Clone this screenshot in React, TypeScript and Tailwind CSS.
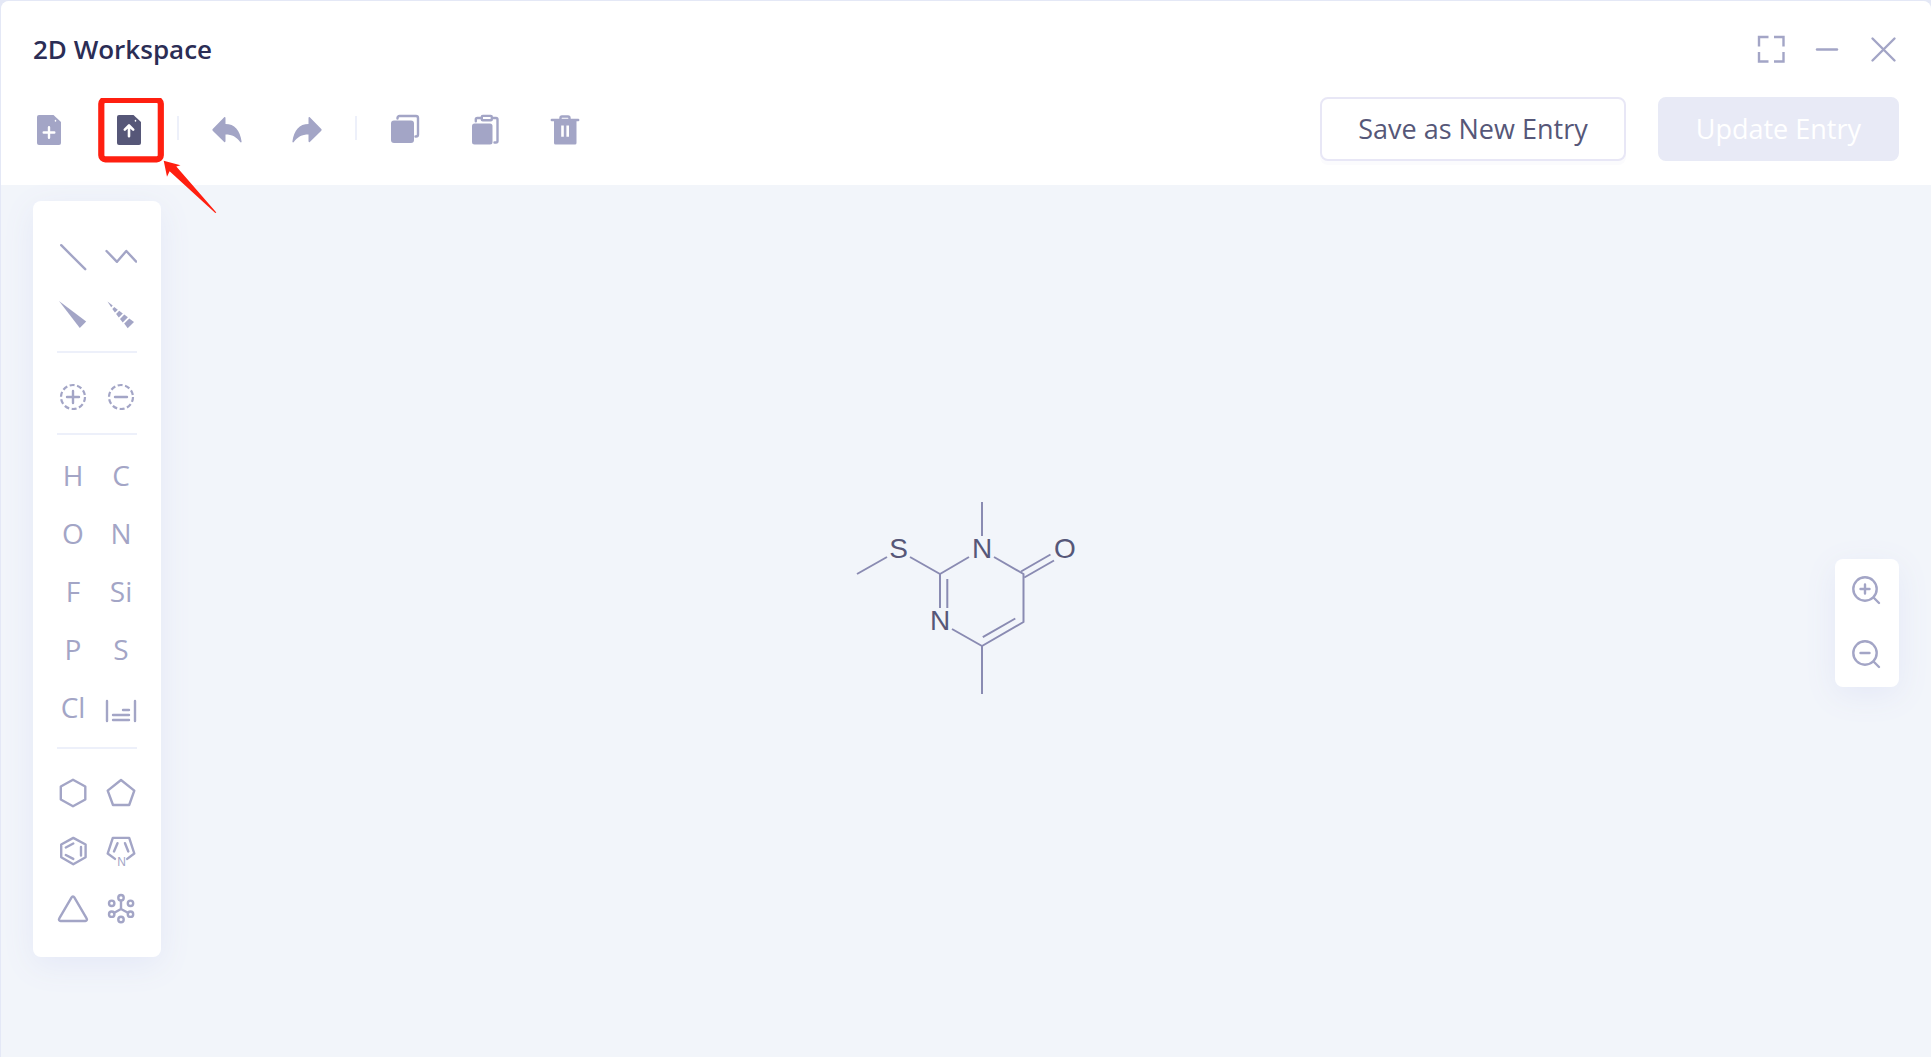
import type { ReactNode } from "react";

function Icon({ children }: { children: ReactNode }) {
  return (
    <svg
      viewBox="0 0 32 32"
      className="block size-8"
      fill="none"
      stroke="currentColor"
      strokeWidth={2.4}
      strokeLinecap="round"
      strokeLinejoin="round"
      aria-hidden="true"
    >
      {children}
    </svg>
  );
}

type Tool = { label: string; icon: ReactNode };

const windowControls: Tool[] = [
  {
    label: "Full screen",
    icon: <path strokeLinecap="butt" strokeLinejoin="miter" d="M4 13.500V4h9.500M19 4h9.500v9.500M28.500 19v9.500H19M13.500 28.500H4V19" />,
  },
  { label: "Minimize", icon: <path d="M6 16.500h20" /> },
  { label: "Close", icon: <path d="M5.500 5.500l22 22M27.500 5.500l-22 22" /> },
];

const historyTools: Tool[] = [
  {
    label: "Undo",
    icon: (
      <path
        fill="currentColor"
        stroke="none"
        d="M1.700 15.100L13.200 3.300c.6-.5 1.300-.2 1.300.6v6.100C23.500 10 29 16 30.600 27.600c.1.900-.9 1.200-1.400.5C25.600 23 21 20.600 14.500 20.600v6.700c0 .8-.7 1.100-1.300.6L1.700 16.700c-.5-.5-.5-1.100 0-1.600z"
      />
    ),
  },
  {
    label: "Redo",
    icon: (
      <path
        fill="currentColor"
        stroke="none"
        d="M30.300 15.100L18.800 3.300c-.6-.5-1.300-.2-1.300.6v6.100C8.500 10 3 16 1.400 27.600c-.1.900.9 1.200 1.400.5C6.400 23 11 20.600 17.500 20.600v6.700c0 .8.7 1.100 1.300.6l11.500-11.200c.5-.5.5-1.100 0-1.600z"
      />
    ),
  },
];

const editTools: Tool[] = [
  {
    label: "Copy",
    icon: (
      <>
        <rect x="2" y="6.500" width="23" height="22.500" rx="3" fill="currentColor" stroke="none" />
        <path d="M8.500 4.500V4a2 2 0 0 1 2-2H27a2 2 0 0 1 2 2v16.500a2 2 0 0 1-2 2h-.5" />
      </>
    ),
  },
  {
    label: "Paste",
    icon: (
      <>
        <rect x="3" y="9.500" width="20.500" height="21" rx="2.500" fill="currentColor" stroke="none" />
        <path d="M6.800 7.200V5.500A1.500 1.500 0 0 1 8.300 4h4M23.500 4H27a1.500 1.500 0 0 1 1.500 1.500V27a1.500 1.500 0 0 1-1.500 1.500h-1.500" />
        <rect x="12.800" y="1.900" width="10" height="4.400" rx="1" />
      </>
    ),
  },
  {
    label: "Delete",
    icon: (
      <>
        <path d="M2.800 6h26.400M11.500 5.700V4a1.500 1.500 0 0 1 1.500-1.500h6A1.500 1.500 0 0 1 20.500 4v1.700" />
        <path
          fill="currentColor"
          stroke="none"
          fillRule="evenodd"
          d="M5 6.500h22.500v22.500a1.500 1.500 0 0 1-1.500 1.500H6.500A1.500 1.500 0 0 1 5 29zM12.200 11.500v11.200h2.600V11.500zM17.400 11.500v11.200H20V11.500z"
        />
      </>
    ),
  },
];

const bondTools: Tool[] = [
  { label: "Single bond", icon: <path d="M4.200 4.200l24 24" /> },
  { label: "Chain", icon: <path d="M1.500 10L12 20.800 21.300 10l9.900 10.600" /> },
  {
    label: "Wedge bond",
    icon: <path fill="currentColor" stroke="none" d="M2 2l27.200 20.600-6.400 6.400z" />,
  },
  {
    label: "Hashed bond",
    icon: (
      <g fill="currentColor" stroke="none">
        <path d="M2.500 2.500l5.200 4.100-1.500 1.600z" />
        <path d="M9.300 8l3.500 2.700-2.900 2.900-2.600-3.500z" />
        <path d="M14.200 11.800l3.600 2.700-4 4-2.700-3.600z" />
        <path d="M19.300 15.600l3.600 2.700-5.200 5.200-2.700-3.600z" />
        <path d="M24.300 19.400l4.700 3.500-6.300 6.300-3.500-4.700z" />
      </g>
    ),
  },
];

const chargeTools: Tool[] = [
  {
    label: "Increase charge",
    icon: (
      <>
        <circle cx="16" cy="16" r="12" strokeWidth={2.2} strokeDasharray="5 2.540" strokeLinecap="butt" />
        <path d="M16 10v12M10 16h12" />
      </>
    ),
  },
  {
    label: "Decrease charge",
    icon: (
      <>
        <circle cx="16" cy="16" r="12" strokeWidth={2.2} strokeDasharray="5 2.540" strokeLinecap="butt" />
        <path d="M10 16h12" />
      </>
    ),
  },
];

const elements = ["H", "C", "O", "N", "F", "Si", "P", "S", "Cl"];

const ringTools: Tool[] = [
  { label: "Cyclohexane", icon: <path d="M16 2.800l12.300 6.700v13L16 29.300 3.800 22.500v-13z" /> },
  { label: "Cyclopentane", icon: <path d="M16 3l13.300 10.600L24.200 28H8L2.700 13.600z" /> },
  {
    label: "Benzene",
    icon: (
      <path d="M16.300 2.900l12.300 6.600v12.800l-12.300 6.900-12.100-6.900V9.500zM8.800 12.500l7.500-4M24 12v8.500M8.800 20l7.500 3.900" />
    ),
  },
  {
    label: "Pyrrole",
    icon: (
      <>
        <path d="M10 23.900L2.700 18.500 7.800 2.900h16.400L29.300 18.500 22.200 23.900M12.500 8.200L9 16.500M20 8.200l3.300 8.300" />
        <text
          x="16.500"
          y="30.500"
          textAnchor="middle"
          fontSize="12"
          fill="currentColor"
          stroke="none"
          className="font-['Liberation_Sans',Arial,sans-serif]"
        >
          N
        </text>
      </>
    ),
  },
  { label: "Cyclopropane", icon: <path d="M14.600 4.400a1.500 1.500 0 0 1 2.700 0l12.300 21a1.600 1.600 0 0 1-1.400 2.600H3.700a1.600 1.600 0 0 1-1.400-2.600z" /> },
  {
    label: "Templates",
    icon: (
      <>
        <circle cx="16" cy="4.700" r="2.700" />
        <circle cx="6.700" cy="10.300" r="2.700" />
        <circle cx="25.500" cy="10.300" r="2.700" />
        <circle cx="6.700" cy="21.200" r="2.700" />
        <circle cx="25.500" cy="21.200" r="2.700" />
        <circle cx="16" cy="26.500" r="2.700" />
        <path d="M16 8v8M9.300 19.700L16 16l6.900 3.700" />
      </>
    ),
  },
];

const zoomTools: Tool[] = [
  {
    label: "Zoom in",
    icon: (
      <>
        <circle cx="14" cy="14" r="11.700" />
        <path d="M14 9.500v9M9.500 14h9M22.500 22.500l5.500 5.500" />
      </>
    ),
  },
  {
    label: "Zoom out",
    icon: (
      <>
        <circle cx="14" cy="14" r="11.700" />
        <path d="M9.500 14h9M22.500 22.500l5.500 5.500" />
      </>
    ),
  },
];

const filePath =
  "M6 1h14.500L28 8v21a2 2 0 0 1-2 2H6a2 2 0 0 1-2-2V3a2 2 0 0 1 2-2z";

function ToolButton({ tool }: { tool: Tool }) {
  return (
    <button type="button" aria-label={tool.label} className="block cursor-pointer">
      <Icon>{tool.icon}</Icon>
    </button>
  );
}

function ToolGrid({ children }: { children: ReactNode }) {
  return <div className="grid grid-cols-2 gap-x-4 gap-y-[26px]">{children}</div>;
}

function PaletteDivider() {
  return <hr className="mt-5 mb-7 border-t-2 border-[#edf0fa]" />;
}

function ToolDivider() {
  return <span className="mx-8 mb-1 h-6 w-0.5 bg-[#edf0fa]" />;
}

function Palette() {
  return (
    <aside className="mt-4 w-32 rounded-lg bg-white px-6 pt-10 pb-8 shadow-[0_8px_32px_#e4e8f7]">
      <ToolGrid>
        {bondTools.map((tool) => (
          <ToolButton key={tool.label} tool={tool} />
        ))}
      </ToolGrid>
      <PaletteDivider />
      <ToolGrid>
        {chargeTools.map((tool) => (
          <ToolButton key={tool.label} tool={tool} />
        ))}
      </ToolGrid>
      <PaletteDivider />
      <ToolGrid>
        {elements.map((el) => (
          <button key={el} type="button" className="flex h-8 cursor-pointer items-start justify-center text-[28px] leading-6">
            {el}
          </button>
        ))}
        <ToolButton
          tool={{
            label: "Periodic table",
            icon: <path d="M2 6v20M30 6v20M18 15h6M8 20h16M8 25h16" />,
          }}
        />
      </ToolGrid>
      <PaletteDivider />
      <ToolGrid>
        {ringTools.map((tool) => (
          <ToolButton key={tool.label} tool={tool} />
        ))}
      </ToolGrid>
    </aside>
  );
}

function Molecule() {
  return (
    <svg
      viewBox="0 0 219 192"
      className="h-48 w-[219px] overflow-visible font-['Liberation_Sans',Arial,sans-serif]"
      role="img"
      aria-label="Molecule structure"
    >
      <g fill="none" stroke="#8a8bb2" strokeWidth={2} strokeLinejoin="round">
        <path d="M125 0v34M0 72l30-17M53 55l30 17 29-17M137 55l29.500 17v48L125 144l-30-17" />
        <path d="M83 72v34M90.300 77v29M158.300 116.500l-32.500 18.700M125 144v48" />
        <path d="M164 69.500L193.500 52.500M167.300 75.500l29.700-17" />
      </g>
      <g fill="#565778" fontSize="28" textAnchor="middle">
        <text x="41.500" y="56">S</text>
        <text x="125" y="56">N</text>
        <text x="208" y="56">O</text>
        <text x="83" y="128">N</text>
      </g>
    </svg>
  );
}

export default function App() {
  return (
    <div className="flex min-h-screen bg-[#e4e8f6] pt-px pl-px font-['Open_Sans','Segoe_UI',sans-serif] text-[#a3a5c6]">
      <div className="flex flex-1 flex-col overflow-hidden rounded-t-lg bg-[#f2f5fa]">
        <header className="bg-white px-8 pt-8 pb-6">
          <div className="flex h-8 items-center justify-between">
            <h1 className="text-[26px] leading-8 font-semibold text-[#2b2d55]">2D Workspace</h1>
            <div className="flex gap-6">
              {windowControls.map((tool) => (
                <ToolButton key={tool.label} tool={tool} />
              ))}
            </div>
          </div>

          <div className="mt-8 flex h-16 items-center justify-between">
            <div className="flex items-center pt-0.5">
              <button type="button" aria-label="New file" className="cursor-pointer">
                <Icon>
                  <path fill="currentColor" stroke="none" d={filePath} />
                  <path stroke="#fff" strokeWidth={1.5} d="M22.500 6.500v.5" />
                  <path stroke="#fff" d="M16 13.200v10.600M10.700 18.500h10.600" />
                </Icon>
              </button>

              {/* Highlighted import button with its pointer */}
              <div className="relative ml-12">
                <button type="button" aria-label="Import file" className="block cursor-pointer text-[#565778]">
                  <Icon>
                    <path fill="currentColor" stroke="none" d={filePath} />
                    <path stroke="#fff" strokeWidth={1.5} d="M22.500 6.500v.5" />
                    <path stroke="#fff" strokeWidth={2.6} d="M16 22.200V12M11.800 15.700L16 11.500l4.200 4.200" />
                  </Icon>
                </button>
                <svg
                  viewBox="0 0 120 120"
                  className="pointer-events-none absolute -top-4 -left-4 z-10 size-[120px] max-w-none"
                  aria-hidden="true"
                >
                  <rect x="4.300" y="1.800" width="59.500" height="59.500" rx="4" fill="none" stroke="#ff1f10" strokeWidth="6.200" />
                  <path fill="#ff1f10" d="M66.700 62.800l16.800 4.400-4.200 1.200 40 46-1 .6-45.700-41.700-2.600 5.400z" />
                </svg>
              </div>

              <ToolDivider />
              <div className="flex gap-12">
                {historyTools.map((tool) => (
                  <ToolButton key={tool.label} tool={tool} />
                ))}
              </div>
              <ToolDivider />
              <div className="flex gap-12">
                {editTools.map((tool) => (
                  <ToolButton key={tool.label} tool={tool} />
                ))}
              </div>
            </div>

            <div className="flex gap-8 text-[27px] leading-8">
              <button
                type="button"
                className="h-16 cursor-pointer rounded-lg border-2 border-[#e8e7f6] bg-white px-9 text-[#565778] shadow-[0_4px_0_#fbfbfd]"
              >
                Save as New Entry
              </button>
              <button type="button" disabled className="h-16 rounded-lg border-2 border-[#e8eaf6] bg-[#e8eaf6] px-9 text-white">
                Update Entry
              </button>
            </div>
          </div>
        </header>

        <main className="relative flex flex-1 items-start justify-between px-8 pb-4">
          <Palette />
          <div className="pointer-events-none absolute inset-0 flex items-center justify-center pb-[46px]">
            <Molecule />
          </div>
          <div className="mt-5 self-center rounded-lg bg-white shadow-[0_8px_32px_#e4e8f7]">
            {zoomTools.map((tool) => (
              <button key={tool.label} type="button" aria-label={tool.label} className="flex size-16 cursor-pointer items-center justify-center">
                <Icon>{tool.icon}</Icon>
              </button>
            ))}
          </div>
        </main>
      </div>
    </div>
  );
}
